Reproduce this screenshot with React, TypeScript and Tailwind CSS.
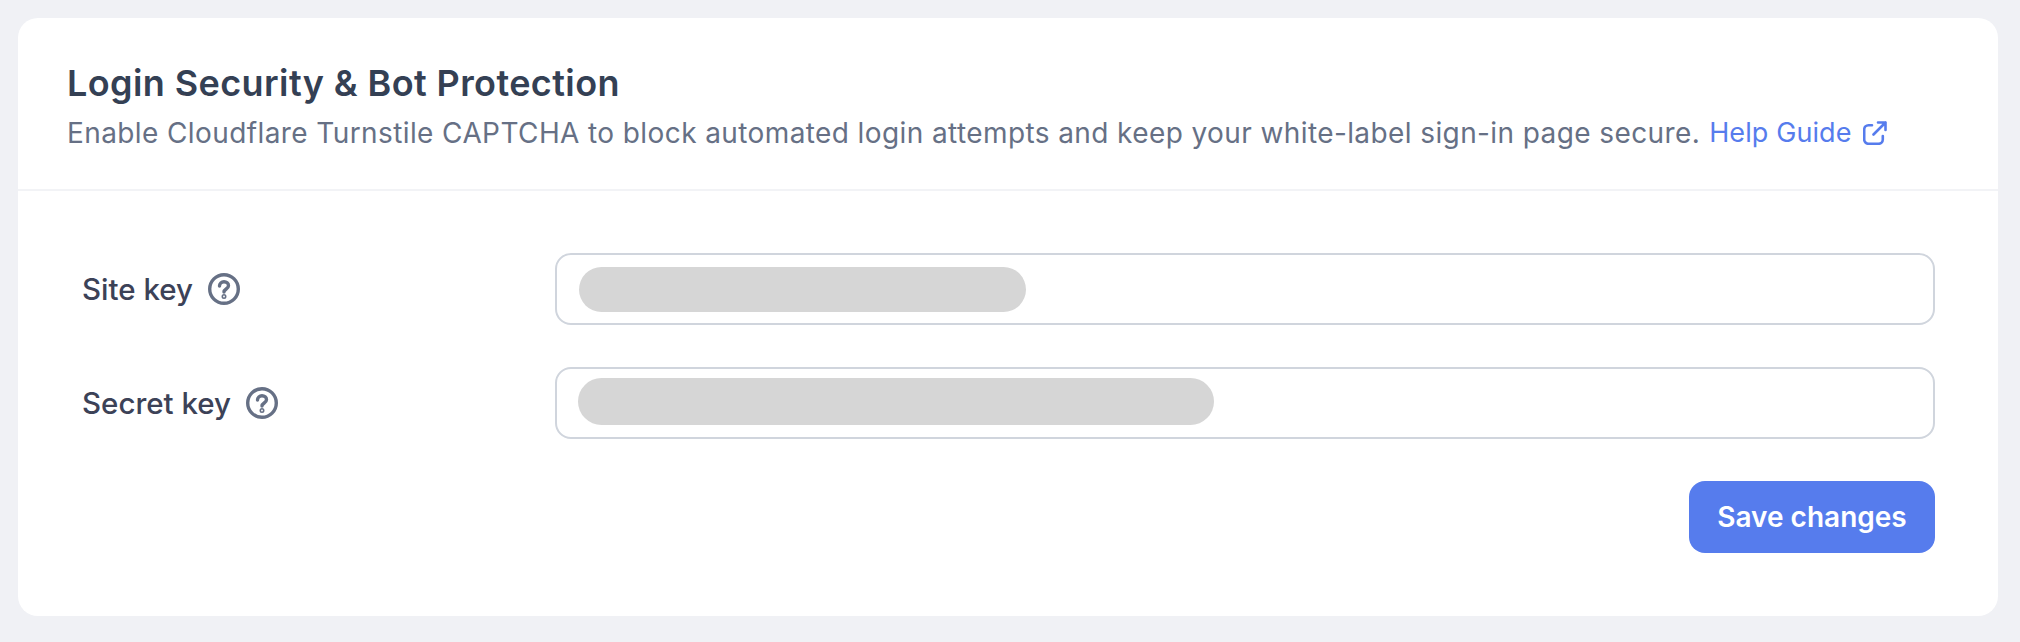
import React from 'react';

const HelpIcon: React.FC = () => (
    <svg className="w-[32px] h-[32px] text-[#667085]" fill="none" viewBox="0 0 32 32" stroke="currentColor" strokeWidth={3.4}>
        <circle cx="16" cy="16" r="14.300" />
        <path strokeLinecap="round" strokeLinejoin="round" d="M11.5 13c0-2.600 2-4.200 4.500-4.200s4.500 1.600 4.500 4c0 3.200-4.500 3.200-4.500 6.200" />
        <circle cx="16" cy="23.500" r="0.800" />
    </svg>
);

const LinkOutIcon: React.FC = () => (
    <svg className="w-[24px] h-[24px]" fill="none" viewBox="0 0 24 24" stroke="currentColor" strokeWidth={2.6} strokeLinecap="round" strokeLinejoin="round">
        <path d="M9 4.200H5.500a4.300 4.300 0 0 0-4.300 4.300v10a4.300 4.300 0 0 0 4.300 4.300h10a4.300 4.300 0 0 0 4.300-4.300V15" />
        <path d="M10.500 13.500L22.500 1.500M15 1.500h7.500V9" />
    </svg>
);

const KeyRow: React.FC<{ label: string; blurClass: string }> = ({ label, blurClass }) => (
    <div className="flex items-center">
        <label className="w-[473px] flex items-center gap-[15px] text-[29.500px] font-medium text-[#3c4257]">
            {label}
            <HelpIcon />
        </label>
        <div className="flex-1 h-[72px] border-2 border-[#d0d5dd] rounded-[16px] flex items-center">
            <div className={`rounded-full bg-[#d6d6d6] ${blurClass}`} />
        </div>
    </div>
);

export default function App() {
    return (
        <div className="w-[2020px] h-[642px] bg-[#f0f1f5] p-[18px] font-['Inter',sans-serif]">
            <div className="bg-white rounded-[20px] h-[598px] w-[1980px]">
                <div className="h-[173px] border-b-2 border-[#f2f3f6] pl-[49px] pt-[43px]">
                    <h2 className="text-[36px] leading-[44px] tracking-[0.4px] font-semibold text-[#344054]">Login Security &amp; Bot Protection</h2>
                    <p className="mt-[9px] text-[28px] leading-[38px] tracking-[0.4px] text-[#667085] flex items-center">
                        Enable Cloudflare Turnstile CAPTCHA to block automated login attempts and keep your white-label sign-in page secure.
                        <a className="ml-[9px] text-[27px] tracking-[0.1px] text-[#567ced] flex items-center gap-[11px]">
                            Help Guide
                            <LinkOutIcon />
                        </a>
                    </p>
                </div>
                <div className="pt-[62px] pl-[64px] pr-[63px] flex flex-col gap-[42px]">
                    <KeyRow label="Site key" blurClass="ml-[22px] w-[447px] h-[45px]" />
                    <KeyRow label="Secret key" blurClass="ml-[21px] w-[636px] h-[47px] -mt-[3px]" />
                </div>
                <div className="flex justify-end pr-[63px] mt-[42px]">
                    <button className="w-[246px] h-[72px] rounded-[16px] bg-[#567ced] text-white text-[28px] font-semibold">Save changes</button>
                </div>
            </div>
        </div>
    );
}
